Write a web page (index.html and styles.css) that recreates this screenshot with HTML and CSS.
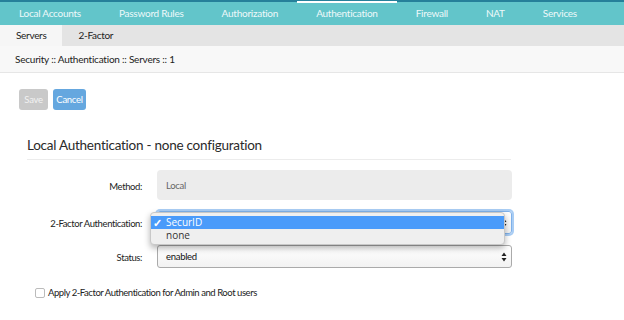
FILE: index.html
```html
<!DOCTYPE html>
<html lang="en">
<head>
    <meta charset="UTF-8">
    <title>Security - Authentication - Servers</title>
    <link rel="stylesheet" href="styles.css">
</head>
<body>
    <div class="topnav">
        <a>Local Accounts</a>
        <a>Password Rules</a>
        <a>Authorization</a>
        <a class="active">Authentication</a>
        <a>Firewall</a>
        <a>NAT</a>
        <a>Services</a>
    </div>
    <div class="subnav">
        <a class="active">Servers</a>
        <a>2-Factor</a>
    </div>
    <div class="breadcrumb">Security :: Authentication :: Servers :: 1</div>

    <div class="page">
        <div class="actions">
            <button class="btn btn-save">Save</button>
            <button class="btn btn-cancel">Cancel</button>
        </div>

        <div class="panel">
            <h3>Local Authentication - none configuration</h3>
            <div class="form">
                <div class="label">Method:</div>
                <div class="field static">Local</div>

                <div class="label">2-Factor Authentication:</div>
                <div class="field-wrap">
                    <div class="field select focused">
                        <span class="value">SecurID</span>
                        <svg class="arrows" width="6" height="10" viewBox="0 0 6 10"><path d="M3 0.5 L5.5 4 H0.5 Z M3 9.5 L5.5 6 H0.5 Z" fill="#222"/></svg>
                    </div>
                    <div class="popup">
                        <div class="option selected"><span class="tick">&#10003;</span>SecurID</div>
                        <div class="option">none</div>
                    </div>
                </div>

                <div class="label">Status:</div>
                <div class="field select">
                    <span class="value">enabled</span>
                    <svg class="arrows" width="6" height="10" viewBox="0 0 6 10"><path d="M3 0.5 L5.5 4 H0.5 Z M3 9.5 L5.5 6 H0.5 Z" fill="#222"/></svg>
                </div>
            </div>
            <label class="check"><span class="box"></span>Apply 2-Factor Authentication for Admin and Root users</label>
        </div>
    </div>
</body>
</html>
```

FILE: styles.css
```css
body {
    margin: 0;
    font-family: Lato, "Open Sans", sans-serif;
    color: #333;
    background: #fff;
}
.topnav {
    display: flex;
    height: 23px;
    background: #62c5ca;
    border-top: 2px solid #26809a;
}
.topnav a {
    position: relative;
    padding: 0 19px;
    line-height: 22px;
    font-size: 10px;
    letter-spacing: -0.25px;
    white-space: nowrap;
    color: #eef9fa;
}
.topnav a.active::before {
    content: "";
    position: absolute;
    left: 0;
    right: 0;
    top: -1px;
    height: 2px;
    background: #fff;
}
.subnav {
    display: flex;
    height: 21px;
    background: #e4e4e4;
}
.subnav a {
    padding: 0 16px;
    line-height: 21px;
    font-size: 10px;
    letter-spacing: -0.3px;
    white-space: nowrap;
    color: #222;
}
.subnav a.active {
    background: #f6f6f6;
}
.breadcrumb {
    height: 26px;
    line-height: 26px;
    padding-left: 15px;
    font-size: 10px;
    letter-spacing: -0.22px;
    color: #222;
    background: #f8f8f8;
    border-bottom: 1px solid #e6e6e6;
}
.page {
    padding: 16px 19px;
}
.actions {
    display: flex;
    gap: 5px;
}
.btn {
    height: 21px;
    padding: 0;
    border: none;
    border-radius: 3px;
    font-family: inherit;
    font-size: 9.5px;
    letter-spacing: -0.3px;
    color: #fff;
}
.btn-save {
    width: 29px;
    background: #c9c9c9;
    color: #f2f2f2;
}
.btn-cancel {
    width: 33px;
    background: #65a7df;
}
.panel {
    padding: 27px 0 0 8px;
}
.panel h3 {
    margin: 0 0 10px;
    padding-bottom: 6px;
    width: 484px;
    font-size: 13.5px;
    letter-spacing: -0.25px;
    font-weight: normal;
    color: #2a2a2a;
    border-bottom: 1px solid #ececec;
}
.form {
    display: grid;
    grid-template-columns: 115px 355px;
    column-gap: 15px;
    row-gap: 11px;
    align-items: center;
}
.label {
    padding-top: 2px;
    text-align: right;
    font-size: 9.5px;
    letter-spacing: -0.4px;
    white-space: nowrap;
    color: #222;
}
.field {
    box-sizing: border-box;
    display: flex;
    align-items: center;
    font-size: 9.5px;
    letter-spacing: -0.3px;
}
.static {
    height: 30px;
    padding-left: 9px;
    background: #ececec;
    border-radius: 4px;
    color: #666;
}
.field-wrap {
    position: relative;
}
.select {
    justify-content: space-between;
    height: 23px;
    padding: 0 4px 0 8px;
    border: 1px solid #aaa;
    border-radius: 3px;
    background: linear-gradient(#fff, #f2f2f2);
    color: #111;
}
.select.focused {
    border-color: #7fb1ea;
    box-shadow: 0 0 0 2px #a9cdf4;
}
.select.focused .value {
    visibility: hidden;
}
.popup {
    position: absolute;
    left: -7px;
    top: 1px;
    width: 355px;
    box-sizing: border-box;
    padding: 3px 0 2px;
    background: #efefef;
    border: 1px solid #c8c8c8;
    border-radius: 4px;
    box-shadow: 0 3px 6px rgba(0,0,0,0.3);
}
.option {
    height: 13px;
    line-height: 13px;
    padding-left: 15px;
    font-family: "Open Sans", sans-serif;
    font-size: 10px;
    color: #333;
}
.option.selected {
    position: relative;
    background: #4a9bfa;
    color: #fff;
}
.tick {
    position: absolute;
    left: 2px;
    font-size: 11px;
    font-weight: bold;
}
.check {
    display: flex;
    align-items: center;
    gap: 3px;
    margin: 19px 0 0 8px;
    font-size: 9.5px;
    letter-spacing: -0.45px;
    color: #222;
}
.check .box {
    width: 8px;
    height: 8px;
    border: 1px solid #bbb;
    border-radius: 2px;
    background: #fff;
}
```
